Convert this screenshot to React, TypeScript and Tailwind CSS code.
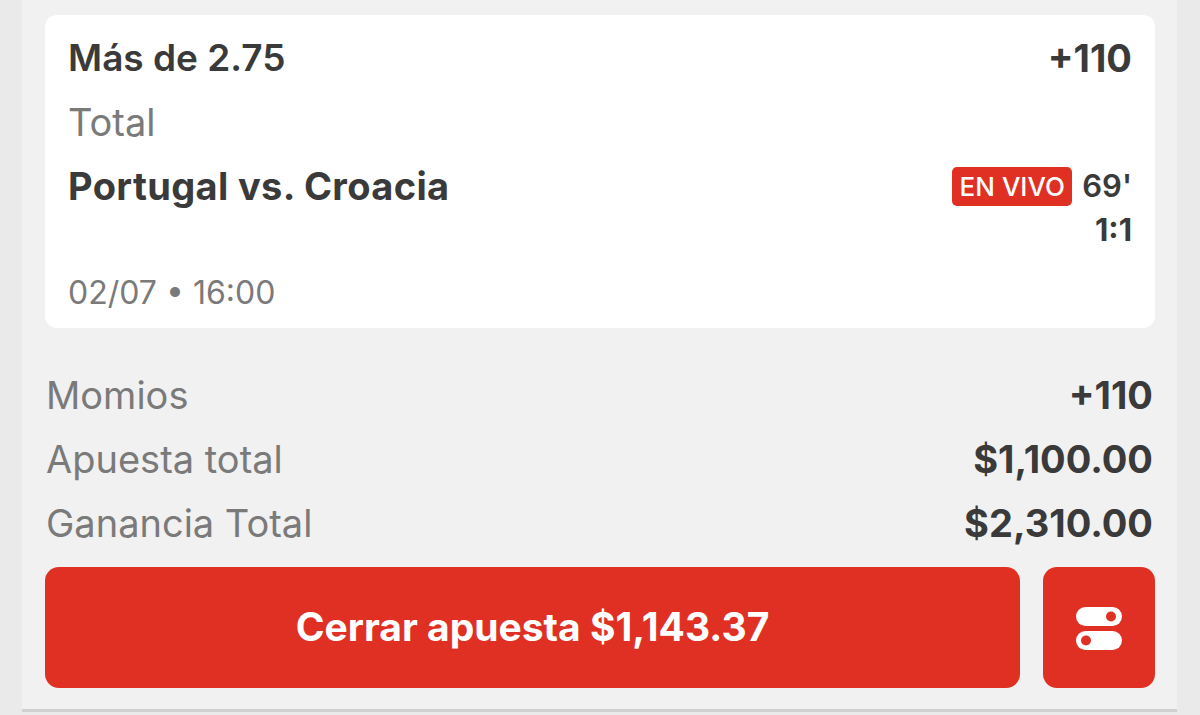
import React from "react";

const font = { fontFamily: "Inter, 'Noto Sans', sans-serif" };

function ToggleIcon() {
  return (
    <svg width="48" height="46" viewBox="0 0 48 46" fill="none">
      <rect x="1" y="2" width="46" height="19" rx="9.5" fill="#ffffff" />
      <circle cx="36" cy="11.5" r="5" fill="#e03024" />
      <rect x="1" y="26" width="46" height="19" rx="9.5" fill="#ffffff" />
      <circle cx="11" cy="35.5" r="5" fill="#e03024" />
    </svg>
  );
}

const summary = [
  { label: "Momios", value: "+110" },
  { label: "Apuesta total", value: "$1,100.00" },
  { label: "Ganancia Total", value: "$2,310.00" },
];

export default function App() {
  return (
    <div className="w-[1200px] h-[715px] bg-[#eaeaea] flex" style={font}>
      <div className="ml-[22px] w-[1155px] h-[712px] bg-[#f1f1f1] border-b-[3px] border-[#d0d0d0] pt-[15px] flex flex-col">
        <div className="ml-[23px] mr-[22px] h-[313px] rounded-[12px] bg-white px-[23px] pt-[11px] text-[#3a3a3a]">
          <div className="h-[64px] flex items-center justify-between">
            <span className="text-[37px] font-semibold">Más de 2.75</span>
            <span className="text-[38px] font-bold">+110</span>
          </div>
          <div className="h-[64px] flex items-center text-[38px] text-[#7a7a7a]">Total</div>
          <div className="flex justify-between items-start">
            <div className="h-[64px] flex items-center text-[38px] font-bold tracking-[0.35px]">
              Portugal vs. Croacia
            </div>
            <div className="flex flex-col items-end">
              <div className="h-[64px] flex items-center gap-[10px]">
                <span className="h-[39px] w-[120px] rounded-[5px] bg-[#e03024] text-white text-[26px] font-medium flex items-center justify-center">
                  EN VIVO
                </span>
                <span className="text-[31px] font-semibold">69'</span>
              </div>
              <div className="leading-[28px] -mt-[2px] text-[31px] font-bold">1:1</div>
            </div>
          </div>
          <div className="mt-[29px] h-[40px] flex items-center text-[32px] text-[#7a7a7a]">
            02/07 • 16:00
          </div>
        </div>

        <div className="mt-[35px] mx-[24px] flex flex-col">
          {summary.map((row) => (
            <div
              key={row.label}
              className="h-[64px] flex items-center justify-between"
            >
              <span className="text-[38px] text-[#7a7a7a]">{row.label}</span>
              <span className="text-[38px] font-bold text-[#3a3a3a]">{row.value}</span>
            </div>
          ))}
        </div>

        <div className="mt-[12px] ml-[23px] mr-[22px] flex gap-[23px]">
          <button className="flex-1 h-[121px] rounded-[14px] bg-[#e03024] text-white text-[39px] font-bold flex items-center justify-center">
            Cerrar apuesta $1,143.37
          </button>
          <button className="w-[112px] h-[121px] rounded-[14px] bg-[#e03024] flex items-center justify-center">
            <ToggleIcon />
          </button>
        </div>
      </div>
    </div>
  );
}
